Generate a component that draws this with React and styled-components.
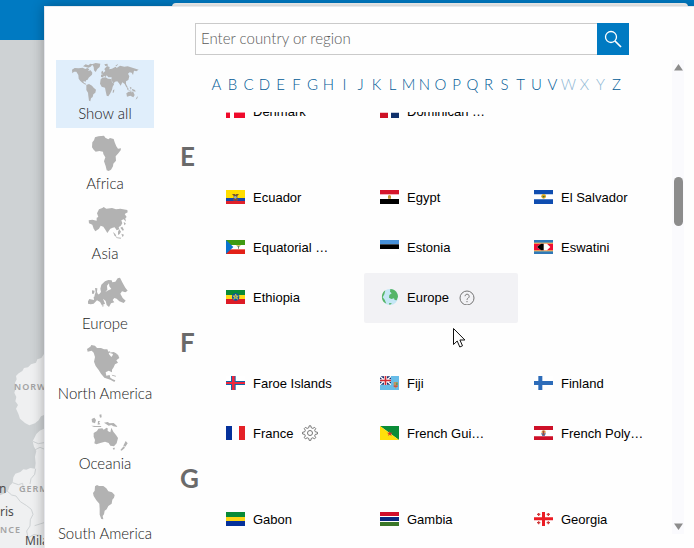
import React, { useLayoutEffect, useRef } from 'react';
import styled, { createGlobalStyle } from 'styled-components';

const GlobalStyle = createGlobalStyle`
  * {
    box-sizing: border-box;
  }
  body {
    margin: 0;
    overflow: hidden;
    font-family: Lato, "Open Sans", sans-serif;
    font-size: 15px;
    font-weight: 300;
    color: #1a1a1a;
  }
`;

const PageStyle = styled.div`
  position: relative;
  display: flex;
  flex-direction: column;
  height: 100vh;
  overflow: hidden;
`;

const TopBar = styled.header`
  height: 40px;
  padding: 3px 6px 0 172px;
  background: #007ac2;
`;

const TopPanel = styled.div`
  height: 100%;
  border-radius: 4px 4px 0 0;
  background: #fefefe;
`;

const MapCanvas = styled.div`
  position: relative;
  flex: 1;
  background: #ced2d4;
  svg {
    position: absolute;
    left: 0;
    bottom: 0;
  }
`;

const MapLabel = styled.span`
  position: absolute;
  left: ${(p) => p.$x}px;
  top: ${(p) => p.$y}px;
  font-family: 'Noto Sans', sans-serif;
  font-size: ${(p) => (p.$city ? 12 : 9)}px;
  font-weight: ${(p) => (p.$city ? 400 : 600)};
  line-height: 14px;
  letter-spacing: ${(p) => (p.$city ? 0 : 1)}px;
  color: ${(p) => (p.$city ? '#4c4c4c' : '#a3a3a3')};
  white-space: nowrap;
`;

const Dialog = styled.section`
  position: absolute;
  inset: 6px 0 0 44px;
  display: flex;
  flex-direction: column;
  background: #fefefe;
  border-top: 1px solid #e9eaed;
  border-left: 1px solid #e6e7ec;
  box-shadow: 0 0 12px rgba(0, 0, 0, 0.3);
`;

const SearchForm = styled.form`
  display: flex;
  margin: 16px 65px 5px 150px;
  input {
    flex: 1;
    min-width: 0;
    height: 32px;
    padding: 0 5px 2px;
    border: 1px solid #cacaca;
    border-right: 0;
    border-radius: 0;
    background: #fefefe;
    font: inherit;
    outline: none;
  }
  input::placeholder {
    color: #5a5a5a;
  }
  button {
    display: flex;
    align-items: center;
    justify-content: center;
    width: 32px;
    height: 32px;
    padding: 0;
    border: 0;
    background: #007ac2;
    cursor: pointer;
  }
`;

const DialogBody = styled.div`
  display: flex;
  flex: 1;
  min-height: 0;
`;

const Sidebar = styled.nav`
  display: flex;
  flex-direction: column;
  gap: 2px;
  width: 109px;
  padding-left: 11px;
`;

const RegionButton = styled.button`
  display: flex;
  flex: none;
  flex-direction: column;
  align-items: center;
  height: 68px;
  padding: 2px 0 4px;
  border: 0;
  background: ${(p) => (p.$active ? '#e0eefb' : 'transparent')};
  font: inherit;
  line-height: 22px;
  color: #1a1a1a;
  white-space: nowrap;
  cursor: pointer;
`;

const Main = styled.main`
  display: flex;
  flex: 1;
  flex-direction: column;
  min-width: 0;
`;

const Alphabet = styled.div`
  display: flex;
  flex: none;
  justify-content: center;
  height: 52px;
  padding: 0 0 4px 7px;
`;

const LetterLink = styled.a`
  display: flex;
  align-items: center;
  justify-content: center;
  width: 16px;
  color: ${(p) => (p.$empty ? '#8db6d4' : '#005b96')};
  text-decoration: none;
`;

const List = styled.div`
  flex: 1;
  min-height: 0;
  padding: 0 0 24px 26px;
  overflow-y: auto;
  scrollbar-width: none;
`;

const GroupTitle = styled.h2`
  height: 36px;
  margin: 0;
  font-size: 26px;
  font-weight: 700;
  line-height: 38px;
  color: #6a6a6a;
`;

const CountryGrid = styled.div`
  display: grid;
  grid-template-columns: repeat(3, 1fr);
  margin-left: 30px;
`;

const CountryButton = styled.button`
  display: flex;
  align-items: center;
  gap: 8px;
  height: 50px;
  padding: 0 0 2px 16px;
  border: 0;
  border-radius: 2px;
  background: ${(p) => (p.$hovered ? '#f2f2f5' : 'transparent')};
  font-family: 'Liberation Sans', Arial, sans-serif;
  font-size: 13px;
  color: #000;
  white-space: nowrap;
  cursor: pointer;
  svg {
    flex: none;
  }
`;

const ScrollTrack = styled.div`
  display: grid;
  grid-template-rows: 15px 102fr 49px 294fr 15px;
  justify-items: center;
  align-items: center;
  width: 12px;
  margin: 0 10px 14px 0;
  background: #fafafd;
`;

const ScrollThumb = styled.div`
  grid-row: 3;
  width: 9px;
  height: 100%;
  border-radius: 5px;
  background: #8c8c8c;
`;

const ScrollArrow = styled.svg`
  grid-row: ${(p) => (p.$down ? 5 : 1)};
`;

const Cursor = styled.svg`
  position: absolute;
  left: 453px;
  top: 328px;
  pointer-events: none;
`;

const regions = [
  {
    name: 'Show all',
    box: '207 186 216 120',
    path: `M216 209L224 204 236 205 248 203 256 207 262 204 268 208 264 213 272 211 277 218 276 224 271 229 266 233 263 239 259 240 257 245 250 243 252 249 256 250 259 254 254 253 247 248 241 243 236 236 235 225 229 215 222 215 217 220Z
      M249 199L257 193 265 196 271 191 278 193 272 200 265 203 257 201ZM276 193L287 189 301 191 299 201 292 207 287 216 282 211 281 201Z
      M259 255L267 252 276 257 281 263 288 269 286 278 280 283 278 291 273 295 271 304 267 302 265 288 264 278 259 270Z
      M302 238L307 233 317 232 324 236 333 237 337 248 343 251 338 260 336 269 331 280 325 289 320 287 317 274 315 263 305 260 300 251Z
      M339 271L343 268 342 277 338 279ZM303 231L303 224 308 223 310 218 316 213 313 207 321 198 329 201 328 208 336 206 347 200 350 204 360 197 373 200 383 199 402 205 416 209 409 214 402 212 399 225 395 218 389 217 384 221 388 229 385 240 378 244 378 252 384 263 379 262 374 252 367 247 362 257 357 250 352 244 345 245 340 251 334 239 335 232 325 232 320 226 317 231 312 227 309 232Z
      M304 215L309 212 310 222 304 221ZM313 193L322 191 324 197 316 198ZM346 197L355 191 350 199Z
      M380 262L387 267 383 271ZM389 260L395 263 392 269ZM383 271L397 273 392 275ZM395 266L405 270 407 275 398 273Z
      M379 280L386 275 396 277 399 274 404 285 400 292 391 287 381 290ZM409 293L414 288 412 295 407 299Z`,
  },
  {
    name: 'Africa',
    box: '75 231 216 120',
    path: `M153 247L163 244 180 242 184 248 193 253 198 249 209 252 212 262 217 274 222 281 231 280 230 286 223 295 215 304 216 317 208 326 207 334 201 344 194 348 188 346 185 333 180 319 184 307 178 297 177 290 166 288 155 290 149 284 144 277 145 262 150 256Z`,
  },
  {
    name: 'Asia',
    box: '75 21 216 120',
    path: `M165 43L175 39 179 36 187 41 204 39 216 43 229 41 250 45 251 52 242 57 248 66 244 70 246 80 239 73 232 76 235 85 230 93 224 96 226 103 218 106 212 97 206 98 199 101 190 114 184 104 178 95 170 92 165 101 154 109 149 101 145 89 135 85 134 76 145 74 158 77 158 68 163 66 159 55Z
      M207 111L214 117 218 126 212 123ZM222 110L226 103 231 110 227 117 222 120ZM229 98L235 95 240 105 236 107ZM216 127L232 128 230 131 217 129ZM232 116L240 119 236 127ZM239 80L246 86 241 91Z`,
  },
  {
    name: 'Europe',
    box: '75 231 216 120',
    path: `M132 319L136 312 150 315 149 306 157 300 166 297 171 291 169 281 172 269 183 259 193 255 203 256 205 262 214 260 221 250 228 248 236 264 244 278 251 287 244 292 234 289 229 296 236 309 245 317 239 324 226 319 218 311 211 309 206 315 211 322 201 325 195 336 188 330 185 318 177 311 183 326 174 331 181 332 176 335 168 321 159 316 149 326 140 328 132 326Z
      M153 279L160 280 159 291 163 300 151 302 155 292ZM144 286L152 287 150 296 144 296Z`,
    holes: 'M184 291L190 284 189 272 195 265 196 274 202 282 193 286Z',
  },
  {
    name: 'North America',
    box: '75 21 216 120',
    path: `M129 42L139 35 142 30 153 32 159 39 171 39 180 43 190 43 193 50 199 48 194 56 202 66 207 59 204 53 213 55 222 59 226 69 217 76 222 83 213 88 209 97 204 104 204 112 194 107 185 112 187 122 197 120 199 128 206 133 214 136 211 141 199 134 181 128 171 116 164 105 155 93 150 80 153 66 149 53 143 47 131 50Z
      M194 53L209 51 219 56 212 58ZM203 119L215 122 216 125 205 122Z`,
  },
  {
    name: 'Oceania',
    box: '75 231 216 120',
    path: `M149 294L159 288 163 281 175 280 179 284 188 278 191 280 191 288 199 292 202 278 208 290 216 300 222 309 218 325 210 334 199 332 194 324 183 320 169 324 157 328 151 325 153 315 149 305Z
      M206 339L213 338 210 346ZM245 318L251 325 244 335 238 332ZM239 334L243 338 233 347 229 345Z
      M143 252L151 248 156 255 153 265 144 262ZM180 263L191 261 197 265 209 264 218 272 220 276 208 274 202 270 194 272 186 267ZM162 258L169 258 165 262 169 268 161 269ZM166 239L172 238 173 247 168 248ZM142 272L156 273 172 273 171 276 150 276Z`,
  },
  {
    name: 'South America',
    box: '207 426 216 120',
    path: `M285 439L291 435 297 438 310 438 319 445 325 454 336 457 344 465 342 473 337 479 335 491 325 498 320 508 314 512 312 523 308 528 310 538 304 537 299 524 299 506 298 491 289 481 281 468 279 459 284 452Z`,
  },
];

const UnionJack = () => (
  <>
    <path d="M0 0h33v27H0z" fill="#fff" />
    <path d="M2 1h10v7zM31 1H21v7zM2 26h10v-7zM31 26H21v-7z" fill="#17306f" />
    <path d="M0 4v6h7zM33 4v6h-7zM0 23v-6h7zM33 23v-6h-7z" fill="#17306f" />
    <path d="M14 0h5v27h-5zM0 11h33v5H0z" fill="#cf2b36" />
  </>
);

// every flag is drawn on a 57 x 42 grid
const flags = {
  denmark: (
    <>
      <path d="M0 0h57v42H0z" fill="#ef0a2b" />
      <path d="M12 0h12v42H12zM0 16h57v10H0z" fill="#fff" />
      <path d="M24 26h33v16H24zM0 26h12v16H0z" fill="#ef0a2b" />
    </>
  ),
  dominican: (
    <>
      <path d="M0 0h57v42H0z" fill="#fff" />
      <path d="M0 0h24v16H0zM33 26h24v16H33z" fill="#10316b" />
      <path d="M33 0h24v16H33zM0 26h24v16H0z" fill="#ce1126" />
    </>
  ),
  ecuador: (
    <>
      <path d="M0 0h57v24H0z" fill="#ffdd00" />
      <path d="M0 24h57v9H0z" fill="#1546a8" />
      <path d="M0 33h57v9H0z" fill="#e0202a" />
      <path d="M18 12h9l2 3 2-3h8l-5 6v11l-5 4-6-4V18z" fill="#74552f" />
      <circle cx="28" cy="22" r="4" fill="#8fb3c9" />
      <path d="M22 28l3 5M35 28l-3 5" stroke="#c33b2e" strokeWidth="2" />
    </>
  ),
  egypt: (
    <>
      <path d="M0 0h57v42H0z" fill="#fff" />
      <path d="M0 0h57v13H0z" fill="#d6162b" />
      <path d="M0 27h57v15H0z" fill="#000" />
      <path d="M24 17l4-2 5 2v9h-9z" fill="#c39a32" />
    </>
  ),
  salvador: (
    <>
      <path d="M0 0h57v42H0z" fill="#fff" />
      <path d="M0 0h57v13H0zM0 28h57v14H0z" fill="#0f4db0" />
      <circle cx="29" cy="19" r="7" fill="#d9a520" />
      <path d="M25 18h8l-4 5z" fill="#3c7440" />
    </>
  ),
  equatorial: (
    <>
      <path d="M0 0h57v42H0z" fill="#fff" />
      <path d="M0 0h57v15H0z" fill="#3f9a12" />
      <path d="M0 28h57v14H0z" fill="#e32118" />
      <path d="M0 0l22 21L0 42z" fill="#0a73ce" />
      <path d="M33 17h9l-3 5v4h-3v-4z" fill="#71866d" />
      <path d="M31 15h13v2H31z" fill="#d8ba2d" />
    </>
  ),
  estonia: (
    <>
      <path d="M0 0h57v42H0z" fill="#fff" />
      <path d="M0 0h57v13H0z" fill="#4891d9" />
      <path d="M0 13h57v14H0z" fill="#000" />
    </>
  ),
  eswatini: (
    <>
      <path d="M0 0h57v42H0z" fill="#2f78b8" />
      <path d="M0 8h57v26H0z" fill="#f4dc6c" />
      <path d="M0 11h57v20H0z" fill="#f00d32" />
      <path d="M9 21l12-10h18l10 10-10 10H21z" fill="#fff" />
      <path d="M9 21l12-10h8v20h-8z" fill="#000" />
    </>
  ),
  ethiopia: (
    <>
      <path d="M0 0h57v15H0z" fill="#098a37" />
      <path d="M0 15h57v12H0z" fill="#fedb15" />
      <path d="M0 27h57v15H0z" fill="#dd1b26" />
      <circle cx="29" cy="21" r="11" fill="#0b4fa5" />
      <path d="M29 12l6 16-14-10h16L23 28z" fill="none" stroke="#eedc42" strokeWidth="2" />
    </>
  ),
  faroe: (
    <>
      <path d="M0 0h57v42H0z" fill="#fff" />
      <path d="M15 0h14v42H15zM0 15h57v12H0z" fill="#0e67a9" />
      <path d="M18 0h8v42h-8zM0 18h57v6H0z" fill="#ef263d" />
    </>
  ),
  fiji: (
    <>
      <path d="M0 0h57v42H0z" fill="#67bce8" />
      <UnionJack />
      <path d="M41 18h12v12l-6 8-6-8z" fill="#bd9562" />
      <path d="M41 29h12v3H41z" fill="#cc3440" />
      <path d="M48 20h5v7h-5z" fill="#5c9a62" />
    </>
  ),
  finland: (
    <>
      <path d="M0 0h57v42H0z" fill="#fff" />
      <path d="M13 0h12v42H13zM0 15h57v12H0z" fill="#2d6cb9" />
    </>
  ),
  france: (
    <>
      <path d="M0 0h57v42H0z" fill="#fff" />
      <path d="M0 0h18v42H0z" fill="#05319b" />
      <path d="M39 0h18v42H39z" fill="#e42127" />
    </>
  ),
  guiana: (
    <>
      <path d="M0 0h57v42z" fill="#0a8c37" />
      <path d="M0 0l57 42H0z" fill="#fedf0b" />
      <path d="M29 14l2 6h7l-5 4 2 6-6-4-5 4 2-6-5-4h6z" fill="#d6362a" />
    </>
  ),
  polynesia: (
    <>
      <path d="M0 0h57v42H0z" fill="#fff" />
      <path d="M0 0h57v12H0zM0 31h57v11H0z" fill="#cd1028" />
      <path d="M22 20a7 7 0 0 1 14 0z" fill="#e5aa48" />
      <path d="M21 22h15l-4 8h-7z" fill="#5478a2" />
      <path d="M26 14h5v13h-5z" fill="#a64a3a" />
    </>
  ),
  gabon: (
    <>
      <path d="M0 0h57v15H0z" fill="#098a37" />
      <path d="M0 15h57v12H0z" fill="#fcd516" />
      <path d="M0 27h57v15H0z" fill="#05319b" />
    </>
  ),
  gambia: (
    <>
      <path d="M0 0h57v42H0z" fill="#fff" />
      <path d="M0 0h57v12H0z" fill="#d00f2b" />
      <path d="M0 15h57v12H0z" fill="#0a2a80" />
      <path d="M0 30h57v12H0z" fill="#3a7728" />
    </>
  ),
  georgia: (
    <>
      <path d="M0 0h57v42H0z" fill="#fff" />
      <path d="M24 0h9v42h-9zM0 16h57v9H0z" fill="#ec1c24" />
      <path
        d="M9 7h10M14 3v9M38 7h10M43 3v9M9 32h10M14 28v9M38 32h10M43 28v9"
        stroke="#cf3a3a"
        strokeWidth="4"
      />
    </>
  ),
  globe: (
    <>
      <circle cx="30" cy="21" r="24" fill="#c5e7f5" />
      <path d="M31-3c15 1 23 12 23 23l-4 11-6-1-2-5-8 2-7-4 1-8 7-5-5-5z" fill="#55b567" />
      <path d="M16 1C5 8 2 25 11 36l8 5-5-12-6-7 5-9z" fill="#55b567" />
      <path d="M27 39l9 1-7 5z" fill="#55b567" />
    </>
  ),
};

const groups = [
  {
    items: [
      ['Denmark', 'denmark'],
      ['Dominican …', 'dominican'],
    ],
  },
  {
    letter: 'E',
    items: [
      ['Ecuador', 'ecuador'],
      ['Egypt', 'egypt'],
      ['El Salvador', 'salvador'],
      ['Equatorial …', 'equatorial'],
      ['Estonia', 'estonia'],
      ['Eswatini', 'eswatini'],
      ['Ethiopia', 'ethiopia'],
      ['Europe', 'globe', 'help'],
    ],
  },
  {
    letter: 'F',
    items: [
      ['Faroe Islands', 'faroe'],
      ['Fiji', 'fiji'],
      ['Finland', 'finland'],
      ['France', 'france', 'gear'],
      ['French Gui…', 'guiana'],
      ['French Poly…', 'polynesia'],
    ],
  },
  {
    letter: 'G',
    items: [
      ['Gabon', 'gabon'],
      ['Gambia', 'gambia'],
      ['Georgia', 'georgia'],
    ],
  },
];

const Flag = ({ code }) => (
  <svg width="19" height="14" viewBox="0 0 57 42" overflow="visible" aria-hidden="true">
    {flags[code]}
  </svg>
);

const HelpIcon = () => (
  <svg width="18" height="16" viewBox="0 0 18 16" fill="none" stroke="#757575">
    <circle cx="10" cy="9" r="7" />
    <path d="M8 7.2a2.1 2.1 0 1 1 3.2 1.9c-.8.5-1.2.8-1.2 1.7M10 12v1.2" />
  </svg>
);

const GearIcon = () => (
  <svg width="18" height="16" viewBox="-1 0 18 16" fill="none" stroke="#757575">
    <path d="M7.200.8h1.600l.5 2 1.500.6 1.800-1 1.100 1.100-1 1.800.6 1.500 2.200.5v1.600l-2.200.5-.6 1.500 1 1.800-1.100 1.100-1.800-1-1.500.6-.5 2H7.200l-.5-2-1.500-.6-1.800 1-1.100-1.100 1-1.800-.6-1.500-2.200-.5V7.300l2.200-.5.6-1.500-1-1.800 1.100-1.100 1.800 1 1.500-.6z" />
    <circle cx="8" cy="8" r="2.5" />
  </svg>
);

const tools = { help: <HelpIcon />, gear: <GearIcon /> };

const MapBackground = () => (
  <MapCanvas>
    <svg width="44" height="208" viewBox="0 0 132 624" aria-hidden="true">
      <g fill="#eff0f1">
        <path d="M132 42L124 54 112 58 108 68 93 73 84 82 72 84 67 93 56 100 48 108 50 118 45 128 48 143 43 158 49 171 46 184 54 195 48 206 55 221 60 236 75 249 88 256 105 250 116 241 123 229 132 225Z" />
        <path d="M132 266L119 272 109 282 98 304 102 320 109 333 105 350 107 369 105 386 91 384 79 389 70 388 61 396 46 401 40 412 38 428 29 437 25 450 15 460 0 466V624H132Z" />
      </g>
      <path
        d="M107 386l-3 17-11 13-3 16M38 428l17 6 13-4 2 17 9 10M20 452l15 13 13 3 13 17 19 12 14 11 5 15-8 16-1 19-10 15 4 21 17-10 21 2M98 304l17 7 17-3M104 330l16-8 12 5M104 557l28-9"
        fill="none"
        stroke="#cfd3d5"
        strokeWidth="3"
      />
    </svg>
    <MapLabel $x={14} $y={340}>NORWAY</MapLabel>
    <MapLabel $x={19} $y={442}>GERMANY</MapLabel>
    <MapLabel $x={0} $y={483}>NCE</MapLabel>
    <MapLabel $city $x={-1} $y={442}>n</MapLabel>
    <MapLabel $city $x={0} $y={465}>ris</MapLabel>
    <MapLabel $city $x={25} $y={494}>Milan</MapLabel>
  </MapCanvas>
);

const CountryList = () => {
  const listRef = useRef(null);

  // start half way through the last row of the D group
  useLayoutEffect(() => {
    listRef.current.scrollTop = 25;
  }, []);

  return (
    <List ref={listRef}>
      {groups.map((group) => (
        <section key={group.letter || 'D'} id={group.letter || 'D'}>
          {group.letter && <GroupTitle>{group.letter}</GroupTitle>}
          <CountryGrid>
            {group.items.map(([name, code, tool]) => (
              <CountryButton key={name} type="button" $hovered={name === 'Europe'}>
                <Flag code={code} />
                {name}
                {tools[tool]}
              </CountryButton>
            ))}
          </CountryGrid>
        </section>
      ))}
    </List>
  );
};

export default function App() {
  return (
    <PageStyle>
      <GlobalStyle />
      <TopBar>
        <TopPanel />
      </TopBar>
      <MapBackground />
      <Dialog role="dialog" aria-label="Country or region">
        <SearchForm onSubmit={(e) => e.preventDefault()}>
          <input
            type="text"
            aria-label="Enter country or region"
            placeholder="Enter country or region"
          />
          <button type="submit" aria-label="Search">
            <svg width="20" height="20" viewBox="0 0 20 20" fill="none" stroke="#fff">
              <circle cx="8" cy="8" r="5.5" strokeWidth="1.3" />
              <path d="M12 12l6 6" strokeWidth="1.7" />
            </svg>
          </button>
        </SearchForm>
        <DialogBody>
          <Sidebar>
            {regions.map((region) => (
              <RegionButton key={region.name} type="button" $active={region.name === 'Show all'}>
                <svg width="72" height="40" viewBox={region.box} fill="#b2b2b2" aria-hidden="true">
                  <path d={region.path} />
                  {region.holes && <path d={region.holes} fill="#fefefe" />}
                </svg>
                {region.name}
              </RegionButton>
            ))}
          </Sidebar>
          <Main>
            <Alphabet>
              {'ABCDEFGHIJKLMNOPQRSTUVWXYZ'.split('').map((letter) => (
                <LetterLink key={letter} href={`#${letter}`} $empty={'WXY'.includes(letter)}>
                  {letter}
                </LetterLink>
              ))}
            </Alphabet>
            <CountryList />
          </Main>
          <ScrollTrack>
            <ScrollArrow width="9" height="7" viewBox="0 0 9 7" fill="#8c8c8c">
              <path d="M4.5 0L9 6.500H0z" />
            </ScrollArrow>
            <ScrollThumb />
            <ScrollArrow $down width="9" height="7" viewBox="0 0 9 7" fill="#8c8c8c">
              <path d="M0 .5h9L4.500 7z" />
            </ScrollArrow>
          </ScrollTrack>
        </DialogBody>
      </Dialog>
      <Cursor width="13" height="20" viewBox="0 0 13 20" fill="#fff" stroke="#111">
        <path d="M.5.500v16l3.700-3.500 2.600 6 2.700-1.200-2.600-5.800h5z" />
      </Cursor>
    </PageStyle>
  );
}
